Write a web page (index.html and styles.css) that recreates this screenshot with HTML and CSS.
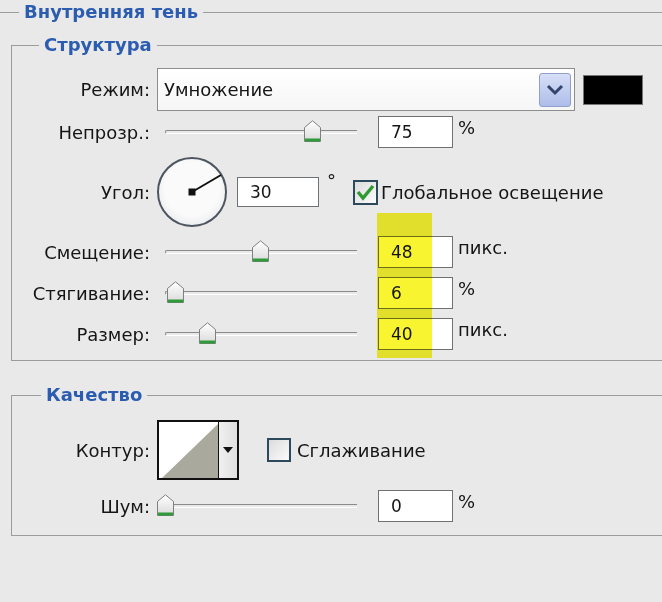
FILE: index.html
```html
<!DOCTYPE html>
<html lang="ru">
<head>
  <meta charset="UTF-8" />
  <title>Внутренняя тень</title>
  <link rel="stylesheet" href="styles.css">
</head>
<body>

<svg width="0" height="0" class="defs">
  <defs>
    <linearGradient id="thumbFill" x1="0" y1="0" x2="0" y2="1">
      <stop offset="0" stop-color="#ffffff"/>
      <stop offset="1" stop-color="#dadada"/>
    </linearGradient>
    <symbol id="thumb" viewBox="0 0 17 22">
      <path d="M0.5 7.5 L8.5 0.8 L16.5 7.5 V21.5 H0.5 Z" fill="url(#thumbFill)" stroke="#7f7f7f"/>
      <rect x="1" y="18.5" width="15" height="3" fill="#2f9a3a"/>
    </symbol>
  </defs>
</svg>

<fieldset class="group outer">
  <legend>Внутренняя тень</legend>

  <!-- Структура -->
  <fieldset class="group">
    <legend>Структура</legend>

    <div class="row row-mode">
      <label class="lbl">Режим:</label>
      <div class="select">
        <span class="select-text">Умножение</span>
        <span class="select-btn">
          <svg width="18" height="12" viewBox="0 0 18 12"><path d="M2 2 L9 9 L16 2" fill="none" stroke="#33456b" stroke-width="3"/></svg>
        </span>
      </div>
      <div class="swatch"></div>
    </div>

    <div class="row row-slider">
      <label class="lbl">Непрозр.:</label>
      <div class="slider">
        <div class="track"></div>
        <svg class="thumb" style="left:147px"><use href="#thumb"/></svg>
      </div>
      <div class="field">75</div>
      <span class="unit">%</span>
    </div>

    <div class="row row-angle">
      <label class="lbl">Угол:</label>
      <div class="dial">
        <svg width="70" height="70" viewBox="0 0 70 70">
          <line x1="35" y1="35" x2="64" y2="18" stroke="#111" stroke-width="2"/>
          <rect x="31.5" y="31.5" width="7" height="7" fill="#111"/>
        </svg>
      </div>
      <div class="field field-angle">30</div>
      <span class="deg">°</span>
      <span class="check on">
        <svg width="19" height="17" viewBox="0 0 19 17"><path d="M2 8 L7 14 L17 2" fill="none" stroke="#2f9a2f" stroke-width="3.4"/></svg>
      </span>
      <span class="check-text">Глобальное освещение</span>
    </div>

    <div class="row row-slider row-first">
      <div class="mark"></div>
      <label class="lbl">Смещение:</label>
      <div class="slider">
        <div class="track"></div>
        <svg class="thumb" style="left:95px"><use href="#thumb"/></svg>
      </div>
      <div class="field">48</div>
      <span class="unit">пикс.</span>
    </div>

    <div class="row row-slider">
      <label class="lbl">Стягивание:</label>
      <div class="slider">
        <div class="track"></div>
        <svg class="thumb" style="left:10px"><use href="#thumb"/></svg>
      </div>
      <div class="field">6</div>
      <span class="unit">%</span>
    </div>

    <div class="row row-slider">
      <label class="lbl">Размер:</label>
      <div class="slider">
        <div class="track"></div>
        <svg class="thumb" style="left:42px"><use href="#thumb"/></svg>
      </div>
      <div class="field">40</div>
      <span class="unit">пикс.</span>
    </div>
  </fieldset>

  <!-- Качество -->
  <fieldset class="group quality">
    <legend>Качество</legend>

    <div class="row row-contour">
      <label class="lbl">Контур:</label>
      <div class="contour">
        <div class="contour-preview">
          <svg width="59" height="56" viewBox="0 0 59 56"><path d="M3 56 L59 2 L59 56 Z" fill="#a9a99d"/></svg>
        </div>
        <div class="contour-btn">
          <svg width="10" height="6" viewBox="0 0 10 6"><path d="M0 0 H10 L5 6 Z" fill="#111"/></svg>
        </div>
      </div>
      <span class="check"></span>
      <span class="check-text">Сглаживание</span>
    </div>

    <div class="row row-slider row-noise">
      <label class="lbl">Шум:</label>
      <div class="slider">
        <div class="track"></div>
        <svg class="thumb" style="left:0px"><use href="#thumb"/></svg>
      </div>
      <div class="field">0</div>
      <span class="unit">%</span>
    </div>
  </fieldset>
</fieldset>

</body>
</html>
```

FILE: styles.css
```css
html {
  overflow: hidden;
}

body {
  margin: 0;
  font-family: "DejaVu Sans", Verdana, sans-serif;
  font-size: 18px;
  color: #151515;
  background: #e9e9e9;
}

.defs {
  position: absolute;
}

.group {
  margin: 10px -40px 0 11px;
  padding: 12px 0 6px 0;
  border: 1px solid #9c9c9c;
}

.group legend {
  margin-left: 27px;
  padding: 0 5px;
  font-size: 18px;
  line-height: 22px;
  font-weight: bold;
  color: #2b5cb0;
}

.outer {
  margin: 0 -40px 0 0;
  padding: 0;
  border: none;
  border-top: 1px solid #9c9c9c;
}

.outer > legend {
  margin-left: 19px;
  line-height: 24px;
}

.quality {
  margin-top: 23px;
  padding: 14px 0 9px 0;
}

.quality > legend {
  margin-left: 29px;
}

.row {
  display: flex;
  align-items: center;
}

.lbl {
  width: 138px;
  flex-shrink: 0;
  text-align: right;
  margin-right: 7px;
}

/* mode */
.row-mode {
  height: 43px;
}

.select {
  display: flex;
  align-items: center;
  justify-content: space-between;
  box-sizing: border-box;
  width: 418px;
  height: 43px;
  padding: 0 3px 0 6px;
  border: 1px solid #8d8d8d;
  background: linear-gradient(#fff, #f6f6f6);
}

.select-btn {
  width: 32px;
  height: 34px;
  border: 1px solid #8fa0cf;
  border-radius: 3px;
  background: linear-gradient(#d7e0f7, #aebde9);
  display: flex;
  align-items: center;
  justify-content: center;
  box-sizing: border-box;
}

.swatch {
  width: 60px;
  height: 30px;
  margin-left: 8px;
  background: #000;
  border: 1px solid #777;
  box-sizing: border-box;
}

/* sliders */
.row-slider {
  height: 40px;
  margin-top: 1px;
}

.row-first {
  margin-top: 5px;
  position: relative;
}

.slider {
  position: relative;
  width: 200px;
  height: 24px;
  margin-right: 21px;
}

.track {
  position: absolute;
  left: 8px;
  right: 0;
  top: 10px;
  height: 2px;
  border-top: 1px solid #8a8a8a;
  border-left: 1px solid #8a8a8a;
  border-bottom: 1px solid #fff;
  border-radius: 3px 0 0 3px;
}

.thumb {
  position: absolute;
  top: 0;
  width: 17px;
  height: 22px;
}

.field {
  width: 75px;
  height: 32px;
  box-sizing: border-box;
  border: 1px solid #6f7275;
  background: #fff;
  padding-left: 12px;
  line-height: 30px;
  font-size: 17px;
}

.unit {
  margin-left: 5px;
  align-self: flex-start;
  margin-top: 5px;
}

/* angle */
.row-angle {
  height: 70px;
  margin-top: 5px;
}

.dial {
  width: 70px;
  height: 70px;
  box-sizing: border-box;
  border: 2px solid #4d5560;
  border-radius: 50%;
  background: radial-gradient(circle at 50% 45%, #fafafa 55%, #dcdfe4);
  margin-right: 10px;
}

.dial svg {
  display: block;
  margin: -2px;
}

.field-angle {
  width: 82px;
  height: 30px;
  line-height: 28px;
}

.deg {
  align-self: flex-start;
  margin: 13px 0 0 8px;
}

.check {
  width: 25px;
  height: 25px;
  box-sizing: border-box;
  border: 2px solid #2c4a5c;
  background: linear-gradient(135deg, #dcdcdc, #fbfbfb);
  display: flex;
  align-items: center;
  justify-content: center;
  margin-left: 17px;
}

.check-text {
  margin-left: 3px;
}

/* highlight */
.mark {
  position: absolute;
  left: 365px;
  top: -19px;
  width: 55px;
  height: 145px;
  background: #f8f530;
  mix-blend-mode: multiply;
  z-index: 1;
}

/* quality */
.row-contour {
  height: 60px;
}

.contour {
  display: flex;
  width: 82px;
  height: 60px;
  box-sizing: border-box;
  border: 2px solid #111;
  background: #fff;
}

.contour-preview {
  width: 59px;
  border-right: 1px solid #111;
  display: flex;
  align-items: flex-end;
}

.contour-preview svg {
  display: block;
}

.contour-btn {
  flex: 1;
  background: linear-gradient(90deg, #f0f0f0, #e0e0e0);
  display: flex;
  align-items: center;
  justify-content: center;
}

.row-contour .check {
  width: 24px;
  height: 24px;
  margin-left: 28px;
}

.row-contour .check-text {
  margin-left: 6px;
}

.row-noise {
  margin-top: 6px;
}
```
